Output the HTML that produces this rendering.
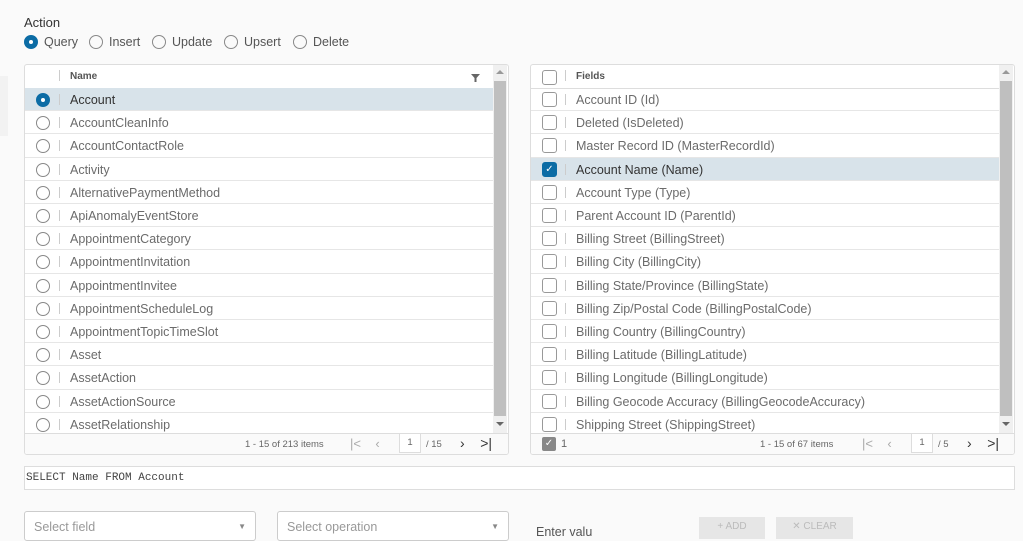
<!DOCTYPE html>
<html><head><style>
body{margin:0;width:1023px;height:534px;overflow:hidden;background:#fafafa;font-family:"Liberation Sans",sans-serif;color:#565656;position:relative}
.a{position:absolute}
.grid{position:absolute;top:64px;width:485px;height:391px;background:#fff;border:1px solid #ddd;border-radius:3px;box-sizing:border-box;overflow:hidden}
.hdr{position:absolute;left:0;top:0;width:468px;height:23px;border-bottom:1px solid #ddd;font-size:10px;font-weight:bold;color:#555}
.row{position:absolute;left:0;width:468px;height:23.2px;border-bottom:1px solid #e6e6e6;box-sizing:border-box;font-size:12.5px;color:#6b6b6b}
.row span{position:absolute;left:45px;top:5px}
.sep{position:absolute;left:34px;top:6px;width:1px;height:11px;background:#ccc}
.rad{position:absolute;left:11px;top:5px;width:14px;height:14px;border:1px solid #888;border-radius:50%;box-sizing:border-box;background:#fff}
.chk{position:absolute;left:11px;top:4px;width:15px;height:15px;border:1px solid #999;border-radius:3px;box-sizing:border-box;background:#fff}
.sel{background:#d8e3ea}
.sel span{color:#333}
.sb{position:absolute;right:1px;top:0;width:14px;height:368px;background:#f0f0f0}
.th{position:absolute;left:1px;width:12px;top:16px;height:335px;background:#bfbfbf}
.ft{position:absolute;left:0;top:368px;width:100%;height:22px;border-top:1px solid #ddd;background:#fafafa;font-size:9.5px;color:#666}
.pg{position:absolute;top:-2px;width:22px;height:20px;background:#fff;border:1px solid #ddd;box-sizing:border-box;text-align:center;line-height:18px}
.sel2{position:absolute;top:511px;width:232px;height:30px;border:1px solid #ccc;border-radius:3px;background:#fff;box-sizing:border-box;font-size:12.5px;color:#999;padding:8px 9px}
.btn{position:absolute;top:517px;height:22px;background:#e6e6e6;color:#bbb;font-size:10px;text-align:center;line-height:20px}
.ar{position:absolute;top:35px;width:14px;height:14px;border-radius:50%;border:1px solid #888;box-sizing:border-box}
.al{position:absolute;top:35px;font-size:12.5px;color:#555}
</style></head><body>
<div class="a" style="left:0;top:76px;width:8px;height:60px;background:#f2f2f2"></div>
<div class="a" style="left:24px;top:15px;font-size:13px;color:#333">Action</div>
<div class="ar" style="left:24px;background:#0c6ca5;border-color:#0c6ca5"><div class="a" style="left:4px;top:4px;width:4px;height:4px;background:#fff;border-radius:50%"></div></div><span class="al" style="left:44px">Query</span>
<div class="ar" style="left:89px"></div><span class="al" style="left:109px">Insert</span>
<div class="ar" style="left:152px"></div><span class="al" style="left:172px">Update</span>
<div class="ar" style="left:224px"></div><span class="al" style="left:244px">Upsert</span>
<div class="ar" style="left:293px"></div><span class="al" style="left:313px">Delete</span>

<div class="grid" style="left:24px">
<div class="hdr"><div class="sep" style="top:5px"></div><span class="a" style="left:45px;top:6px">Name</span>
<svg class="a" style="left:446px;top:8px" width="9" height="9"><path d="M0 1h9L5.5 5v4h-2V5z" fill="#666"/></svg></div>
<div id="L"></div>
<div class="sb"><div class="a" style="left:3px;top:5px;border:4px solid transparent;border-bottom:4px solid #999;border-top:0"></div><div class="th"></div><div class="a" style="left:3px;top:357px;border:4px solid transparent;border-top:4px solid #666;border-bottom:0"></div></div>
<div class="ft"><span class="a" style="left:220px;top:5px">1 - 15 of 213 items</span>
<span class="a" style="left:325px;top:2px;font-size:13px;color:#aaa">|&lt;&nbsp;&nbsp;&nbsp;&nbsp;‹</span>
<div class="pg" style="left:374px;top:-1px">1</div><span class="a" style="left:401px;top:5px">/ 15</span>
<span class="a" style="left:435px;top:1px;font-size:14px;color:#333">›&nbsp;&nbsp;&nbsp;&nbsp;&gt;|</span></div>
</div>

<div class="grid" style="left:530px">
<div class="hdr"><div class="chk" style="top:5px"></div><div class="sep" style="top:5px"></div><span class="a" style="left:45px;top:6px">Fields</span></div>
<div id="R"></div>
<div class="sb"><div class="a" style="left:3px;top:5px;border:4px solid transparent;border-bottom:4px solid #999;border-top:0"></div><div class="th"></div><div class="a" style="left:3px;top:357px;border:4px solid transparent;border-top:4px solid #666;border-bottom:0"></div></div>
<div class="ft"><div class="a" style="left:11px;top:3px;width:14px;height:14px;background:#888;border-radius:2px;color:#fff;font-size:10px;text-align:center;line-height:14px">✓</div><span class="a" style="left:30px;top:4px;font-size:11px">1</span>
<span class="a" style="left:229px;top:5px">1 - 15 of 67 items</span>
<span class="a" style="left:331px;top:2px;font-size:13px;color:#aaa">|&lt;&nbsp;&nbsp;&nbsp;&nbsp;‹</span>
<div class="pg" style="left:380px;top:-1px">1</div><span class="a" style="left:407px;top:5px">/ 5</span>
<span class="a" style="left:436px;top:1px;font-size:14px;color:#333">›&nbsp;&nbsp;&nbsp;&nbsp;&gt;|</span></div>
</div>

<div class="a" style="left:24px;top:466px;width:991px;height:24px;border:1px solid #ddd;background:#fff;box-sizing:border-box;font-family:'Liberation Mono',monospace;font-size:11px;color:#444;padding:5px 0 0 1px">SELECT Name FROM Account</div>

<div class="sel2" style="left:24px">Select field<span class="a" style="right:9px;top:10px;font-size:8px;color:#888">▼</span></div>
<div class="sel2" style="left:277px">Select operation<span class="a" style="right:9px;top:10px;font-size:8px;color:#888">▼</span></div>
<div class="a" style="left:536px;top:525px;font-size:12.5px;color:#555">Enter valu</div>
<div class="btn" style="left:699px;width:66px">+ ADD</div>
<div class="btn" style="left:776px;width:77px">✕ CLEAR</div>

<script>
var L=["Account","AccountCleanInfo","AccountContactRole","Activity","AlternativePaymentMethod","ApiAnomalyEventStore","AppointmentCategory","AppointmentInvitation","AppointmentInvitee","AppointmentScheduleLog","AppointmentTopicTimeSlot","Asset","AssetAction","AssetActionSource","AssetRelationship"];
var R=["Account ID (Id)","Deleted (IsDeleted)","Master Record ID (MasterRecordId)","Account Name (Name)","Account Type (Type)","Parent Account ID (ParentId)","Billing Street (BillingStreet)","Billing City (BillingCity)","Billing State/Province (BillingState)","Billing Zip/Postal Code (BillingPostalCode)","Billing Country (BillingCountry)","Billing Latitude (BillingLatitude)","Billing Longitude (BillingLongitude)","Billing Geocode Accuracy (BillingGeocodeAccuracy)","Shipping Street (ShippingStreet)"];
var h="";L.forEach(function(t,i){var s=i==0;h+='<div class="row'+(s?' sel':'')+'" style="top:'+(23+i*23.2)+'px">'+(s?'<div class="rad" style="background:#0c6ca5;border-color:#0c6ca5"><div class="a" style="left:4px;top:4px;width:4px;height:4px;background:#fff;border-radius:50%"></div></div>':'<div class="rad"></div>')+'<div class="sep"></div><span>'+t+'</span></div>'});
document.getElementById("L").innerHTML=h;h="";
R.forEach(function(t,i){var s=i==3;h+='<div class="row'+(s?' sel':'')+'" style="top:'+(23+i*23.2)+'px">'+(s?'<div class="chk" style="background:#0c6ca5;border-color:#0c6ca5;color:#fff;font-size:10px;text-align:center;line-height:13px">✓</div>':'<div class="chk"></div>')+'<div class="sep"></div><span>'+t+'</span></div>'});
document.getElementById("R").innerHTML=h;
</script>
</body></html>
